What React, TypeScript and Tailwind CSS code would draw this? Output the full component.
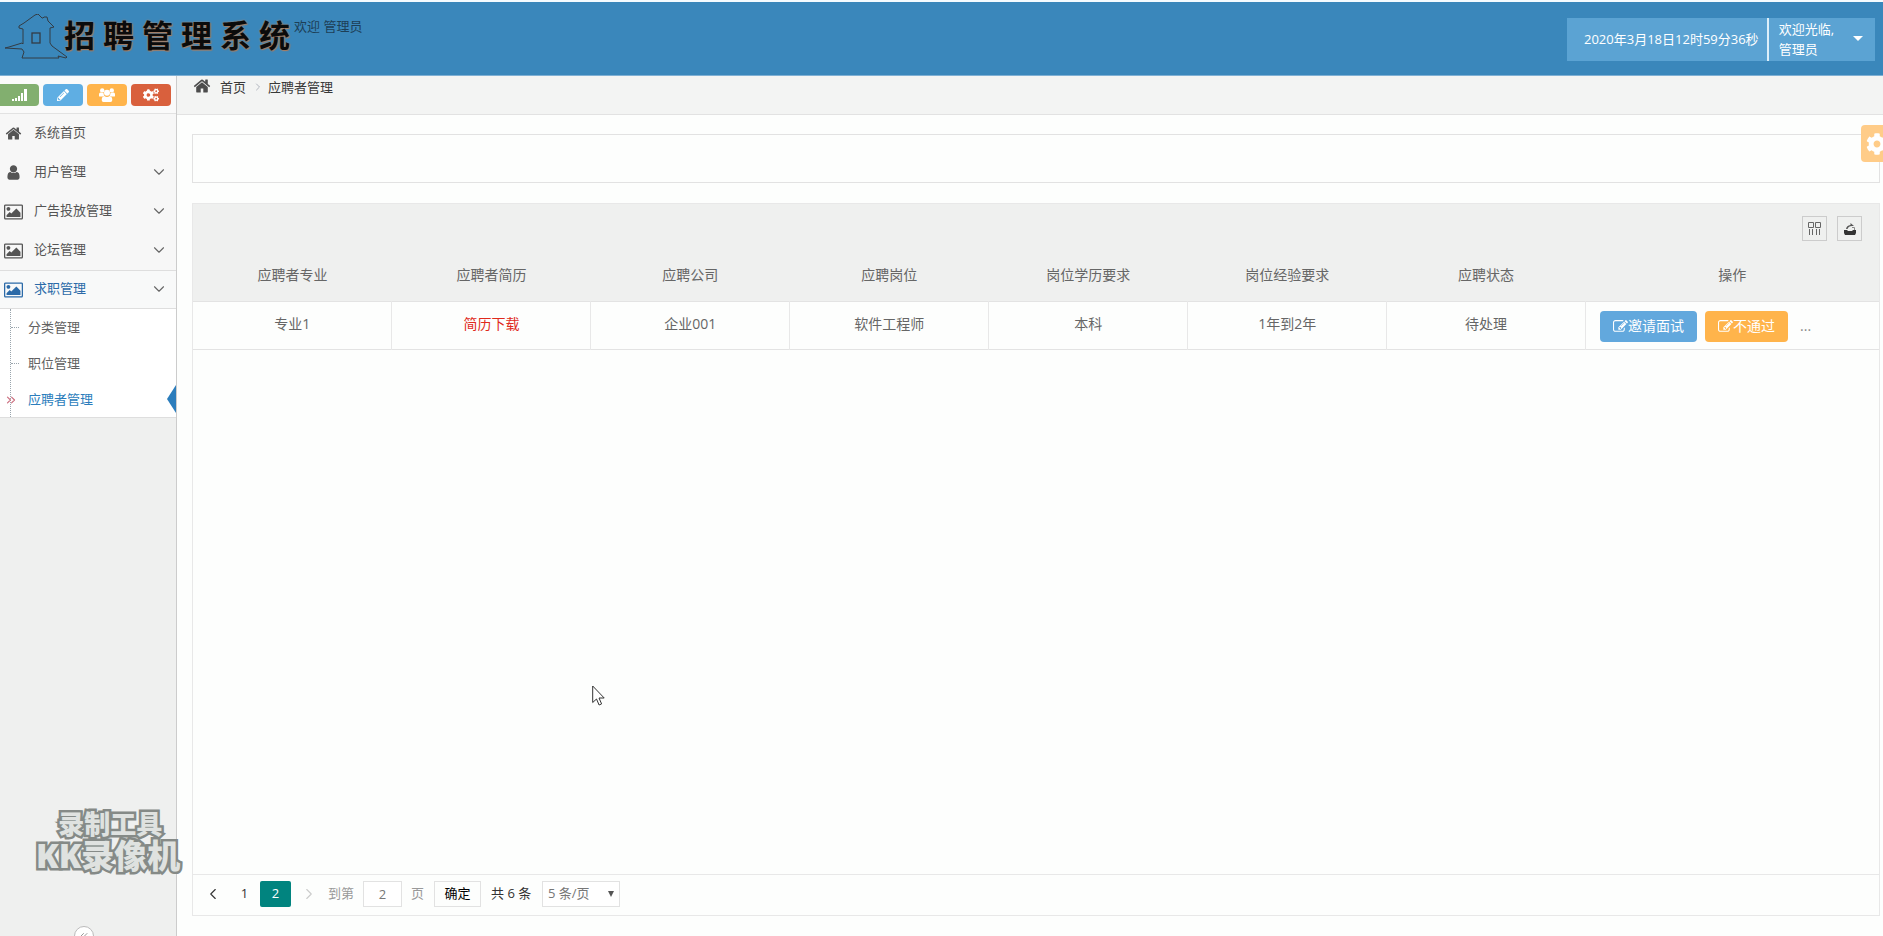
import type { ReactNode } from "react";
import { FaCog, FaCogs, FaPencilAlt } from "react-icons/fa";
import { ChevronDown, ChevronLeft, ChevronRight, ChevronsLeft, ChevronsRight } from "lucide-react";

function Glyph({ d, className, box = "0 0 1792 1792" }: { d: string; className: string; box?: string }) {
  return (
    <svg viewBox={box} className={className} fill="currentColor" aria-hidden="true">
      <path d={d} />
    </svg>
  );
}

const HOME =
  "M1472 992v480q0 26-19 45t-45 19h-384v-384h-256v384h-384q-26 0-45-19t-19-45v-480q0-1 .5-3t.5-3l575-474 575 474q1 2 1 6zm223-69l-62 74q-8 9-21 11h-3q-13 0-21-7l-692-577-692 577q-12 8-24 7-13-2-21-11l-62-74q-8-10-7-23.5t11-21.5l719-599q32-26 76-26t76 26l244 204v-195q0-14 9-23t23-9h192q14 0 23 9t9 23v408l219 182q10 8 11 21.5t-7 23.5z";
const USER =
  "M1536 1399q0 109-62.5 187t-150.5 78h-854q-88 0-150.5-78t-62.5-187q0-85 8.5-160.5t31.5-152 58.5-131 94-89 134.5-34.5q131 128 313 128t313-128q76 0 134.5 34.5t94 89 58.5 131 31.5 152 8.5 160.5zm-256-887q0 159-112.5 271.5t-271.5 112.5-271.5-112.5-112.5-271.5 112.5-271.5 271.5-112.5 271.5 112.5 112.5 271.5z";
const PICTURE =
  "M576 576q0 80-56 136t-136 56-136-56-56-136 56-136 136-56 136 56 56 136zm1024 384v448h-1408v-192l320-320 160 160 512-512zm96-704h-1600q-13 0-22.5 9.5t-9.5 22.5v1216q0 13 9.5 22.5t22.5 9.5h1600q13 0 22.5-9.5t9.5-22.5v-1216q0-13-9.5-22.5t-22.5-9.5zm160 32v1216q0 66-47 113t-113 47h-1600q-66 0-113-47t-47-113v-1216q0-66 47-113t113-47h1600q66 0 113 47t47 113z";
const EDIT =
  "M888 1184l116-116-152-152-116 116v56h96v96h56zm440-720q-16-16-33 1l-350 350q-17 17-1 33t33-1l350-350q17-17 1-33zm80 594v190q0 119-84.5 203.5t-203.5 84.5h-832q-119 0-203.5-84.5t-84.5-203.5v-832q0-119 84.5-203.5t203.5-84.5h832q63 0 117 25 15 7 18 23 3 17-9 29l-49 49q-14 14-32 8-23-6-45-6h-832q-66 0-113 47t-47 113v832q0 66 47 113t113 47h832q66 0 113-47t47-113v-126q0-13 9-22l64-64q15-15 35-7t20 29zm-96-738l288 288-672 672h-288v-288zm444 132l-92 92-288-288 92-92q28-28 68-28t68 28l152 152q28 28 28 68t-28 68z";

function HouseLogo() {
  return (
    <svg viewBox="0 0 66 48" className="h-12 w-[66px]" fill="none" stroke="#333c45" strokeWidth="1" aria-hidden="true">
      <path d="M1 34l4-1 13-4 1 1v-15l-4-1v-2l5-3 11-8 3-1 4 4h1l1-1h3l1 4 6 6-4 1v15l2 3 15 11-1 1-8-2 1 2H18l2-6-2-3-17-1" />
      <rect x="28" y="19" width="8" height="10" strokeWidth="1.3" />
    </svg>
  );
}

function GroupIcon() {
  return (
    <svg viewBox="0 0 16 14" className="h-3.5 w-4" fill="currentColor" aria-hidden="true">
      <circle cx="3.2" cy="2.400" r="2.200" />
      <circle cx="12.800" cy="2.400" r="2.200" />
      <circle cx="8" cy="4.800" r="3" />
      <path d="M0 8V6.200Q0 4.500 1.500 4.500L4.500 5Q4.500 6.500 5.400 7.500L4 8.500H1Q0 8.500 0 8zM16 8V6.200Q16 4.500 14.500 4.500L11.500 5Q11.500 6.500 10.600 7.500L12 8.500h3Q16 8.500 16 8z" />
      <path d="M5.300 8Q8 9.800 10.700 8Q13.300 8.600 13.300 12Q13.300 14 11.500 14H4.500Q2.700 14 2.700 12Q2.700 8.600 5.300 8z" />
    </svg>
  );
}

function Header() {
  return (
    <header className="flex h-[75px] justify-between border-t-2 border-[#f4fbff] bg-[#3a87bb]">
      <div className="flex pl-1">
        <a href="#" className="flex pt-3">
          <HouseLogo />
          <span className="-ml-1.5 flex gap-2 text-[31px] leading-[42px] font-bold text-[#0b0b0b] [text-shadow:0_0_2px_#b98a6a,1px_1px_1px_#a0785f]">
            {["招", "聘", "管", "理", "系", "统"].map((c) => (
              <span key={c}>{c}</span>
            ))}
          </span>
        </a>
        <span className="pt-3.5 pl-1 text-[13px] leading-5 text-[#1d3f57]">欢迎 管理员</span>
      </div>
      <div className="mt-4 mr-2 flex h-[43px] bg-[#5ba3d3] text-[13px] text-white">
        <time className="flex items-center pr-2 pl-[17px]">2020年3月18日12时59分36秒</time>
        <button type="button" className="flex items-center border-l-2 border-[#dceffa] pr-3 pb-0.5 pl-2.5 text-left leading-5">
          <span>
            欢迎光临,
            <br />
            管理员
          </span>
          <svg viewBox="0 0 10 5" className="ml-[19px] h-[5px] w-2.5 fill-white" aria-hidden="true">
            <path d="M0 0h10L5 5z" />
          </svg>
        </button>
      </div>
    </header>
  );
}

function NavItem({ icon, label, arrow, active }: { icon: ReactNode; label: string; arrow?: boolean; active?: boolean }) {
  return (
    <a
      href="#"
      className={
        active
          ? "flex h-[39px] items-center border-y border-[#dedede] bg-[#f8f9f9] text-[#2b6aa8]"
          : "flex h-[39px] items-center bg-[#f7f7f7] text-[#555]"
      }
    >
      <span className="flex w-[34px] justify-center pr-[7px]">{icon}</span>
      <span className="flex-1 pb-0.5">{label}</span>
      {arrow && <ChevronDown className="mr-2 mb-0.5 size-[18px] text-[#666]" strokeWidth={1.5} />}
    </a>
  );
}

function SubItem({ label, active }: { label: string; active?: boolean }) {
  return (
    <li className="relative">
      {active ? (
        <ChevronsRight className="absolute top-3 left-1 size-3.5 text-[#cc7080]" />
      ) : (
        <span className="absolute top-[18px] left-[11px] w-2 border-t border-dotted border-[#9aa5ad]" />
      )}
      <a href="#" className={active ? "block pl-7 leading-9 text-[#2b7dbc]" : "block pl-7 leading-9 text-[#616161]"}>
        {label}
      </a>
      {active && (
        <svg viewBox="0 0 9 28" className="absolute top-1 right-0 h-7 w-[9px] fill-[#2b7dbc]" aria-hidden="true">
          <path d="M9 0v28L0 14z" />
        </svg>
      )}
    </li>
  );
}

function Sidebar() {
  return (
    <aside className="relative w-[177px] shrink-0 overflow-hidden border-r border-[#ccc] bg-[#eff0ef] text-[13px]">
      <div className="flex h-[38px] items-center gap-1 border-b border-[#e2e2e2] bg-[#fafafa] text-white">
        <button type="button" aria-label="统计" className="flex h-[22px] w-[39px] items-center justify-center rounded-r-sm bg-[#82af6f]">
          <svg viewBox="0 0 15 12" className="h-3 w-[15px] fill-white" aria-hidden="true">
            <path d="M0 10h2v2H0zM3 9h2v3H3zM6 7h2v5H6zM9 4h2v8H9zM12 0h3v12h-3z" />
          </svg>
        </button>
        <button type="button" aria-label="编辑" className="flex h-[22px] w-10 items-center justify-center rounded-sm bg-[#5faee3]">
          <FaPencilAlt className="size-3" />
        </button>
        <button type="button" aria-label="用户" className="flex h-[22px] w-10 items-center justify-center rounded-sm bg-[#ffb44b]">
          <GroupIcon />
        </button>
        <button type="button" aria-label="设置" className="flex h-[22px] w-10 items-center justify-center rounded-sm bg-[#d9603d]">
          <FaCogs className="size-4" />
        </button>
      </div>
      <nav>
        <NavItem icon={<Glyph d={HOME} className="size-[17px]" />} label="系统首页" />
        <NavItem icon={<Glyph d={USER} className="size-[17px]" />} label="用户管理" arrow />
        <NavItem icon={<Glyph d={PICTURE} box="-64 0 1920 1792" className="h-[18px] w-[19px]" />} label="广告投放管理" arrow />
        <NavItem icon={<Glyph d={PICTURE} box="-64 0 1920 1792" className="h-[18px] w-[19px]" />} label="论坛管理" arrow />
        <NavItem icon={<Glyph d={PICTURE} box="-64 0 1920 1792" className="h-[18px] w-[19px]" />} label="求职管理" arrow active />
        <ul className="relative border-b border-[#dedede] bg-white">
          <li aria-hidden="true" className="absolute inset-y-0 left-[10px] border-l border-dotted border-[#9aa5ad]" />
          <SubItem label="分类管理" />
          <SubItem label="职位管理" />
          <SubItem label="应聘者管理" active />
        </ul>
      </nav>
      <button
        type="button"
        aria-label="收起菜单"
        className="absolute -bottom-2.5 left-[74px] flex size-5 items-center justify-center rounded-full border border-[#bbb] bg-white text-[#999]"
      >
        <ChevronsLeft className="size-3" />
      </button>
    </aside>
  );
}

const HEADINGS = ["应聘者专业", "应聘者简历", "应聘公司", "应聘岗位", "岗位学历要求", "岗位经验要求", "应聘状态"];

function ApplicantTable() {
  return (
    <section className="mt-5 flex flex-1 flex-col border border-[#e8e8e8]">
      <div className="flex h-[50px] justify-end gap-[10px] bg-[#eff0ef] pt-3 pr-[17px]">
        <button type="button" aria-label="筛选列" className="flex size-[25px] items-center justify-center border border-[#ccc]">
          <svg viewBox="0 0 13 13" className="size-[13px]" fill="none" stroke="#666" aria-hidden="true">
            <path d="M.5 .5h5v5h-5zM7.500 .5h5v5h-5zM1.500 7v6M4.500 7v6M8.500 7v6M11.500 7v6" />
          </svg>
        </button>
        <button type="button" aria-label="导出" className="flex size-[25px] items-center justify-center border border-[#ccc]">
          <svg viewBox="0 0 12 12" className="size-3" fill="#333" aria-hidden="true">
            <path d="M0 7h3l1 1h4l1-1h3v3l-1 2H1l-1-2z" />
            <path d="M6.500 0L10 3H8Q4.500 3 3.500 6H2Q2.500 2.500 6.500 2z" fill="#555" />
            <path d="M8 4.500h2.500V7" fill="none" stroke="#888" />
          </svg>
        </button>
      </div>
      <table className="w-full table-fixed border-collapse text-center text-sm text-[#666]">
        <thead className="bg-[#eff0ef]">
          <tr className="h-[47px] border-b border-[#e3e3e3]">
            {HEADINGS.map((h) => (
              <th key={h} scope="col" className="w-[11.8%] pb-1 font-normal">
                {h}
              </th>
            ))}
            <th scope="col" className="pb-1 font-normal">
              操作
            </th>
          </tr>
        </thead>
        <tbody>
          <tr className="h-12 border-b border-[#e3e3e3]">
            <td className="border-r border-[#e8e8e8] pb-0.5">专业1</td>
            <td className="border-r border-[#e8e8e8] pb-0.5">
              <a href="#" className="text-[#e02a1c]">
                简历下载
              </a>
            </td>
            <td className="border-r border-[#e8e8e8] pb-0.5">企业001</td>
            <td className="border-r border-[#e8e8e8] pb-0.5">软件工程师</td>
            <td className="border-r border-[#e8e8e8] pb-0.5">本科</td>
            <td className="border-r border-[#e8e8e8] pb-0.5">1年到2年</td>
            <td className="border-r border-[#e8e8e8] pb-0.5">待处理</td>
            <td className="pt-0.5">
              <div className="flex items-center gap-2 pl-3.5 text-white">
                <button type="button" className="flex h-[31px] items-center rounded-sm bg-[#62a8dd] px-[13px]">
                  <Glyph d={EDIT} className="size-[15px]" />
                  邀请面试
                </button>
                <button type="button" className="flex h-[31px] items-center rounded-sm bg-[#ffb44b] px-[13px]">
                  <Glyph d={EDIT} className="size-[15px]" />
                  不通过
                </button>
                <span className="pl-1 text-[#888]">...</span>
              </div>
            </td>
          </tr>
        </tbody>
      </table>
      <div className="flex-1" />
      <Pagination />
    </section>
  );
}

function Pagination() {
  return (
    <div className="flex h-[41px] items-center border-t border-[#e8e8e8] pb-0.5 pl-3 text-[13px] text-[#333]">
      <button type="button" aria-label="上一页" className="flex w-4 justify-center">
        <ChevronLeft className="size-[18px] shrink-0" strokeWidth={1.5} />
      </button>
      <button type="button" className="ml-2 w-[31px]">
        1
      </button>
      <button type="button" aria-current="page" className="h-[26px] w-[31px] rounded-xs bg-[#01847f] text-white">
        2
      </button>
      <button type="button" aria-label="下一页" className="ml-[10px] flex w-4 justify-center text-[#ccc]">
        <ChevronRight className="size-[18px] shrink-0" strokeWidth={1.5} />
      </button>
      <label className="ml-[11px] flex items-center text-[#999]">
        到第
        <input type="text" defaultValue="2" className="mx-[9px] h-[26px] w-[39px] border border-[#e2e2e2] bg-white text-center text-[#777]" />
        页
      </label>
      <button type="button" className="ml-[10px] h-[26px] w-[47px] border border-[#e2e2e2] text-black">
        确定
      </button>
      <span className="ml-[10px] w-[41px] whitespace-nowrap">共 6 条</span>
      <span className="relative ml-[10px]">
        <select aria-label="每页条数" className="h-[26px] w-[78px] appearance-none border border-[#e2e2e2] bg-white pl-[5px] text-[#777]">
          <option>5 条/页</option>
        </select>
        <svg viewBox="0 0 6 6" className="pointer-events-none absolute top-[10px] right-[6px] size-1.5 fill-[#555]" aria-hidden="true">
          <path d="M0 0h6L3 6z" />
        </svg>
      </span>
    </div>
  );
}

export default function App() {
  return (
    <div className="relative flex min-h-screen flex-col overflow-hidden bg-[#fdfefd] font-['Open_Sans','Noto_Sans_CJK_SC',sans-serif] text-[#393939]">
      <Header />
      <div className="flex flex-1 border-t border-[#7fb0d4]">
        <Sidebar />
        <main className="flex min-w-0 flex-1 flex-col">
          <nav aria-label="面包屑" className="flex h-[39px] items-start border-b border-[#e2e2e2] bg-[#f3f4f3] pt-px pl-4 text-[13px] leading-5">
            <Glyph d={HOME} className="mr-[9px] size-[18px] text-[#4c4c4c]" />
            <a href="#" className="mr-1.5">首页</a>
            <ChevronRight className="mt-1 mr-1 size-3 text-[#b2b6bf]" />
            <span>应聘者管理</span>
          </nav>
          <div className="flex flex-1 flex-col pt-[19px] pr-[3px] pb-5 pl-[15px]">
            <div className="h-[49px] border border-[#e2e2e2]" />
            <ApplicantTable />
          </div>
        </main>
      </div>

      <button
        type="button"
        aria-label="页面设置"
        className="absolute top-[125px] right-0 flex h-[37px] w-[22px] items-center overflow-hidden rounded-l-sm bg-[#ffcc88] pl-[5px] text-white"
      >
        <FaCog className="size-[22px] shrink-0" />
      </button>

      <div className="pointer-events-none absolute bottom-14 left-9 text-center font-black text-[#dfe2e0] [-webkit-text-stroke:5px_#858a87] [paint-order:stroke_fill]">
        <div className="pl-1 text-[26px] leading-8">录制工具</div>
        <div className="text-[33px] leading-12 -mt-2">KK录像机</div>
      </div>

      <svg viewBox="0 0 13 21" className="pointer-events-none absolute top-[685px] left-[592px] h-[21px] w-[13px]" aria-hidden="true">
        <path d="M.7 1v16.500l3.800-3.500 2.600 6 2.500-1.100-2.600-5.900h5.200z" fill="#fff" stroke="#333" />
      </svg>
    </div>
  );
}
